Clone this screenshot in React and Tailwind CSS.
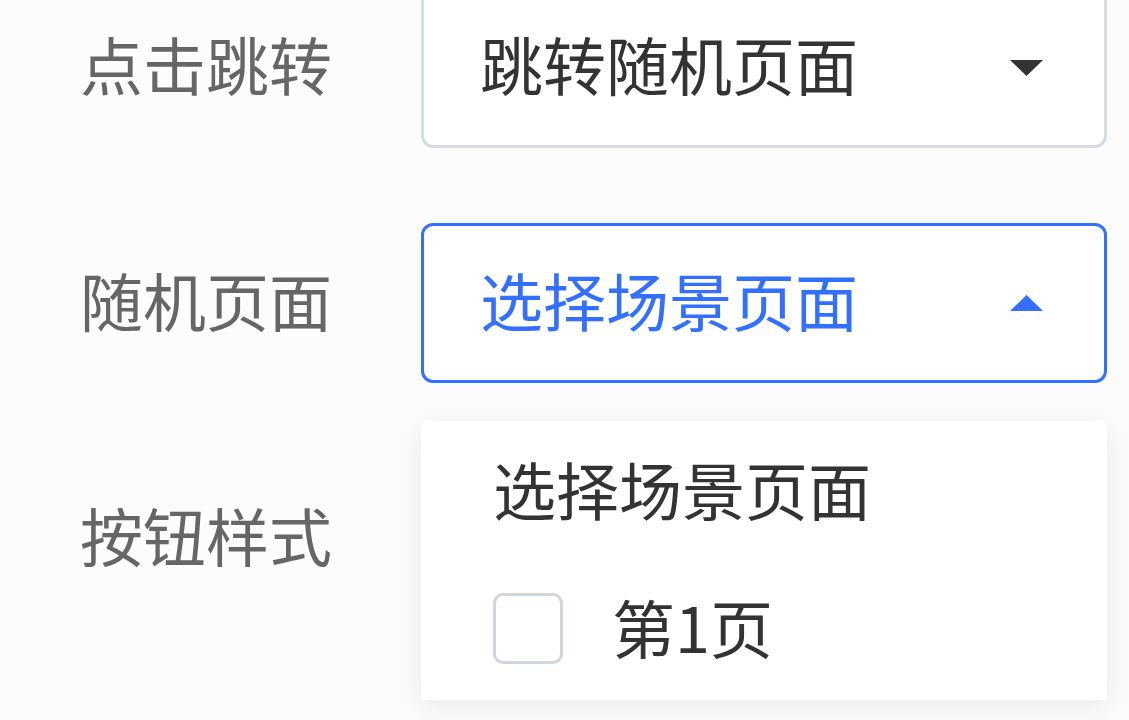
import React from 'react';

function Caret({ up, color }) {
  return (
    <svg width="35" height="18" viewBox="0 0 35 18" className="shrink-0">
      {up ? (
        <path d="M17.5 1 L34 17 L1 17 Z" fill={color} />
      ) : (
        <path d="M1 1 L34 1 L17.5 17 Z" fill={color} />
      )}
    </svg>
  );
}

export default function App() {
  return (
    <div
      className="min-h-screen overflow-hidden bg-[#fcfcfc] pl-[80px] text-[63px] leading-none"
      style={{ fontFamily: '"Noto Sans CJK SC", "Noto Sans", sans-serif' }}
    >
      <div className="-mt-[12px] flex w-[1027px] flex-col gap-[75px]">
        <div className="flex items-center">
          <div className="w-[341px] pb-[12px] text-[#666666]">点击跳转</div>
          <div className="flex h-[160px] flex-1 items-center justify-between rounded-[12px] border-[3px] border-[#d6dce3] bg-white pl-[56px] pr-[60px] text-[#333333]">
            <span className="pb-[12px]">跳转随机页面</span>
            <Caret color="#333333" />
          </div>
        </div>

        <div className="flex items-center">
          <div className="w-[341px] pb-[10px] text-[#666666]">随机页面</div>
          <div className="relative flex-1">
            <div className="flex h-[160px] items-center justify-between rounded-[12px] border-[3px] border-[#3370ff] bg-white pl-[56px] pr-[60px] text-[#3370ff]">
              <span className="pb-[10px]">选择场景页面</span>
              <Caret up color="#3370ff" />
            </div>
            <div className="absolute left-0 right-0 top-[198px] z-10 flex h-[279px] flex-col bg-white pl-[72px] pt-[38px] text-[#333333] shadow-[0_6px_28px_rgba(0,0,0,0.08)]">
              <div className="flex h-[64px] items-center pb-[8px]">选择场景页面</div>
              <div className="mt-[70px] flex h-[71px] items-center gap-[49px]">
                <span className="h-[71px] w-[70px] rounded-[10px] border-[3px] border-[#cfd6de] bg-white" />
                <span className="pb-[6px]">第1页</span>
              </div>
            </div>
          </div>
        </div>

        <div className="flex items-center">
          <div className="w-[341px] pb-[10px] text-[#666666]">按钮样式</div>
          <div className="h-[160px] flex-1" />
        </div>
      </div>
    </div>
  );
}
